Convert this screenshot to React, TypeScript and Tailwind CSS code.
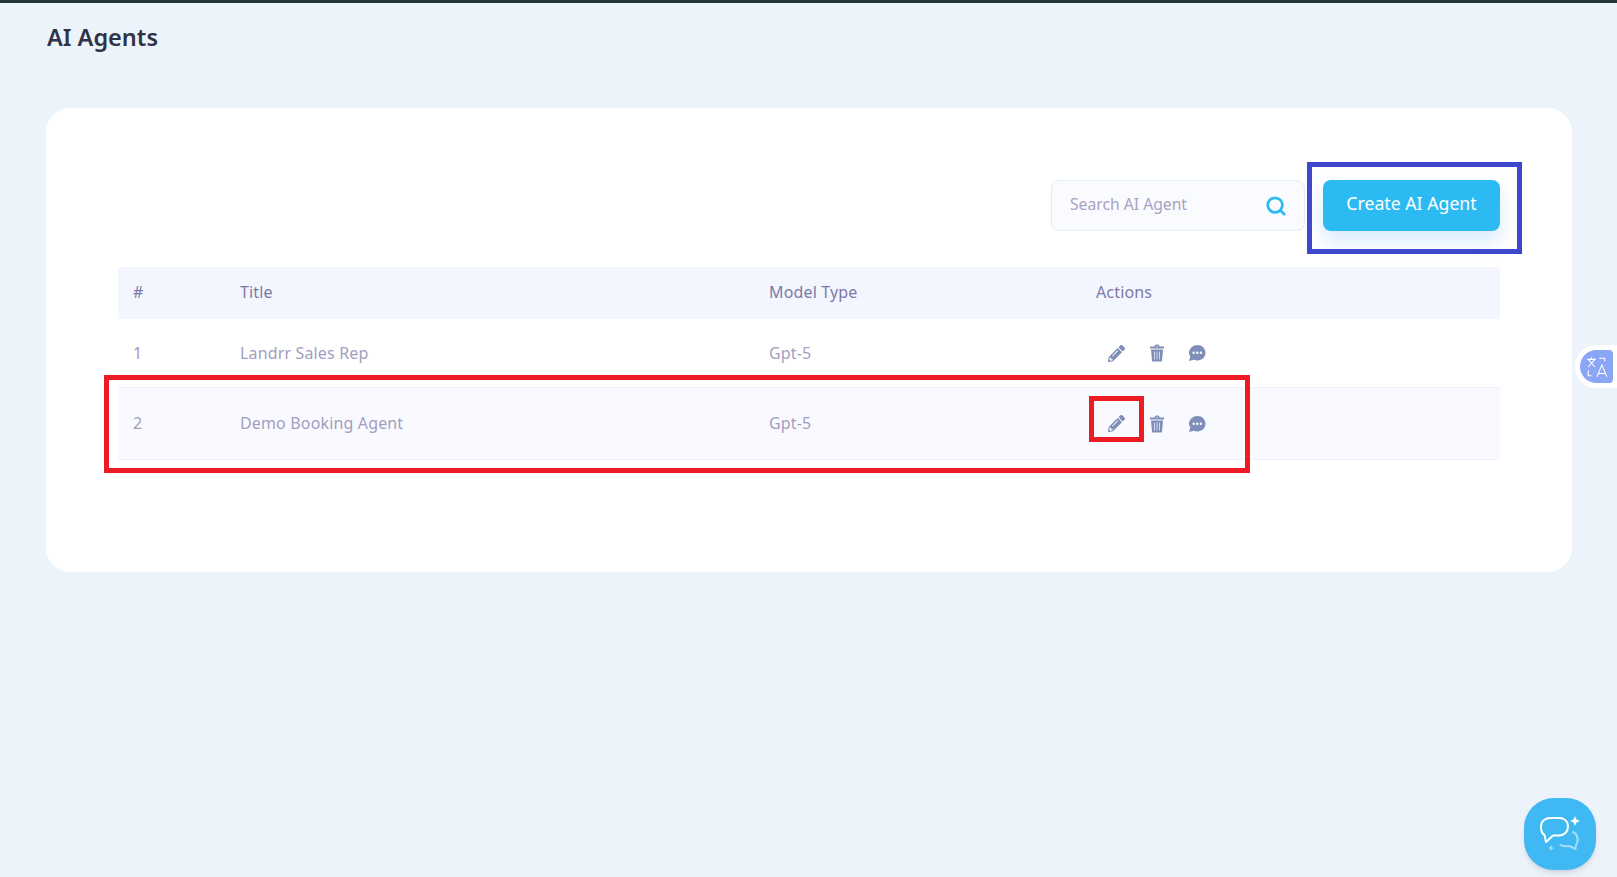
import { Search } from "lucide-react";
import { FaPencilAlt } from "react-icons/fa";

const agents = [
  { id: 1, title: "Landrr Sales Rep", model: "Gpt-5" },
  { id: 2, title: "Demo Booking Agent", model: "Gpt-5" },
];

function RowActions() {
  return (
    <div className="flex items-center text-[#7f8db9]">
      <FaPencilAlt className="ml-[27px] w-[17px] h-[17px]" />
      <svg className="ml-[24px] w-[16px] h-[18px]" viewBox="0 0 16 18">
        <path d="M5.500 2.500C5.500 1.200 6.500.6 8 .6s2.500.6 2.500 1.900H15v2H1v-2zM6.800 2.500h2.400C9.200 2 8.800 1.800 8 1.800s-1.200.2-1.200.7z" fill="currentColor" fillRule="evenodd" />
        <path d="M2 5.500h12L13 16.500c0 .6-.5 1-1 1H4c-.5 0-1-.4-1-1z" fill="currentColor" />
        <path d="M5.500 7.500v8M8 7.500v8M10.500 7.500v8" stroke="#d5daea" strokeWidth="1" />
      </svg>
      <svg className="ml-[23px] w-[18px] h-[18px]" viewBox="0 0 18 18">
        <path d="M9.500 1C14 1 17.500 4.500 17.500 8.800S14 16.500 9.500 16.500c-1.300 0-2.500-.3-3.600-.8L1 17l1.300-4.400C1.500 11.300 1 10.100 1 8.800 1 4.500 5 1 9.500 1z" fill="currentColor" />
        <circle cx="5.700" cy="8.800" r="1.200" fill="#fff" />
        <circle cx="9.300" cy="8.800" r="1.200" fill="#fff" />
        <circle cx="12.900" cy="8.800" r="1.200" fill="#fff" />
      </svg>
    </div>
  );
}

function ChatWidget() {
  return (
    <div className="fixed left-[1524px] top-[798px] w-[72px] h-[72px] rounded-[30px] bg-[#3fb8f3] shadow-md">
      <svg width="72" height="72" viewBox="0 0 72 72" fill="none">
        <path
          d="M27 20h8c5 0 9 3 9 8.500s-4 9-9 9h-6l-7 6.500-1.500-7C18.500 36 17 33 17 28.500 17 23 21 20 27 20z"
          stroke="#fff"
          strokeWidth="2"
          strokeLinejoin="round"
        />
        <path
          d="M49 34c5 2 6 9 3 13l-.5 4-6-3c-3 .5-6 .3-9-1"
          stroke="#a5dcf8"
          strokeWidth="2"
          strokeLinecap="round"
          strokeLinejoin="round"
        />
        <path d="M51 18l1.500 3.500L56 23l-3.500 1.500L51 28l-1.500-3.500L46 23l3.500-1.500z" fill="#fff" />
        <path d="M27 47l.9 2.100L30 50l-2.100.9L27 53l-.9-2.100L24 50l2.100-.9z" fill="#a5dcf8" />
      </svg>
    </div>
  );
}

function TranslateTab() {
  return (
    <div className="fixed left-[1575px] top-[345px] w-[42px] h-[43px] rounded-l-[21px] bg-white flex items-center pl-[5px]">
      <div className="w-[33px] h-[33px] rounded-l-[17px] rounded-r-[4px] bg-[#8aa6f5] flex items-center justify-center">
        <svg width="24" height="24" viewBox="0 0 22 22" fill="none" stroke="#fff" strokeWidth="1">
          <path d="M2 4h8M6 2v2M3 11l6-7M3 4l6 7" />
          <path d="M13 3h5v3M3 14v5h3" />
          <path d="M11 20l4.500-11 4.500 11M12.500 17h6" />
        </svg>
      </div>
    </div>
  );
}

export default function App() {
  return (
    <div className="relative min-h-[877px] bg-[#ecf3fb] border-t-[3px] border-[#21393b] font-['Noto_Sans',sans-serif]">
      <div className="pl-[46px] pr-[45px] pt-[19px]">
        <h1 className="text-[23.5px] leading-[30px] font-semibold text-[#2f3346] ml-[1px]">AI Agents</h1>

        <div className="mt-[56px] h-[464px] bg-white rounded-[24px] pt-[72px] px-[72px]">
          <div className="flex justify-end gap-[18px]">
            <div className="w-[254px] h-[51px] rounded-[8px] border border-[#e2edf4] bg-[#f9fbff] flex items-center justify-between pl-[18px] pr-[17px]">
              <span className="text-[15.7px] leading-[20px] -mt-[4px] text-[#a9a1c2]">Search AI Agent</span>
              <Search className="w-[22px] h-[22px] text-[#2cbaf2]" strokeWidth={3} />
            </div>
            <button className="w-[177px] h-[51px] pb-[5px] rounded-[8px] bg-[#2cbaf2] text-white text-[17.7px] shadow-[0_10px_20px_rgba(44,150,240,0.2)]">
              Create AI Agent
            </button>
          </div>

          <div className="mt-[36px] text-[16px] tracking-[0.15px]">
            <div className="grid grid-cols-[107px_528px_328px_1fr] items-center h-[52px] pb-[2px] bg-[#f3f6fe] text-[#7d79a6]">
              <div className="pl-[15px]">#</div>
              <div className="pl-[15px]">Title</div>
              <div className="pl-[16px]">Model Type</div>
              <div className="pl-[15px]">Actions</div>
            </div>
            {agents.map((a) => (
              <div
                key={a.id}
                className={
                  a.id === 2
                    ? "grid grid-cols-[107px_528px_328px_1fr] items-center h-[72px] border-b border-[#eef1fa] bg-[#f9faff] text-[#a49dc0]"
                    : "grid grid-cols-[107px_528px_328px_1fr] items-center h-[69px] border-b border-[#eef1fa] text-[#a49dc0]"
                }
              >
                <div className={a.id === 2 ? "pl-[15px] pb-[2px]" : "pl-[15px]"}>{a.id}</div>
                <div className={a.id === 2 ? "pl-[15px] pb-[2px]" : "pl-[15px]"}>{a.title}</div>
                <div className={a.id === 2 ? "pl-[16px] pb-[2px]" : "pl-[16px]"}>{a.model}</div>
                <RowActions />
              </div>
            ))}
          </div>
        </div>
      </div>

      {/* annotation boxes drawn over the page */}
      <div className="absolute left-[1307px] top-[159px] w-[215px] h-[92px] border-[5px] border-[#3f47cc]" />
      <div className="absolute left-[104px] top-[372px] w-[1146px] h-[98px] border-[5px] border-[#ed1c24]" />
      <div className="absolute left-[1089px] top-[393px] w-[55px] h-[46px] border-[5px] border-[#ed1c24]" />

      <TranslateTab />
      <ChatWidget />
    </div>
  );
}
